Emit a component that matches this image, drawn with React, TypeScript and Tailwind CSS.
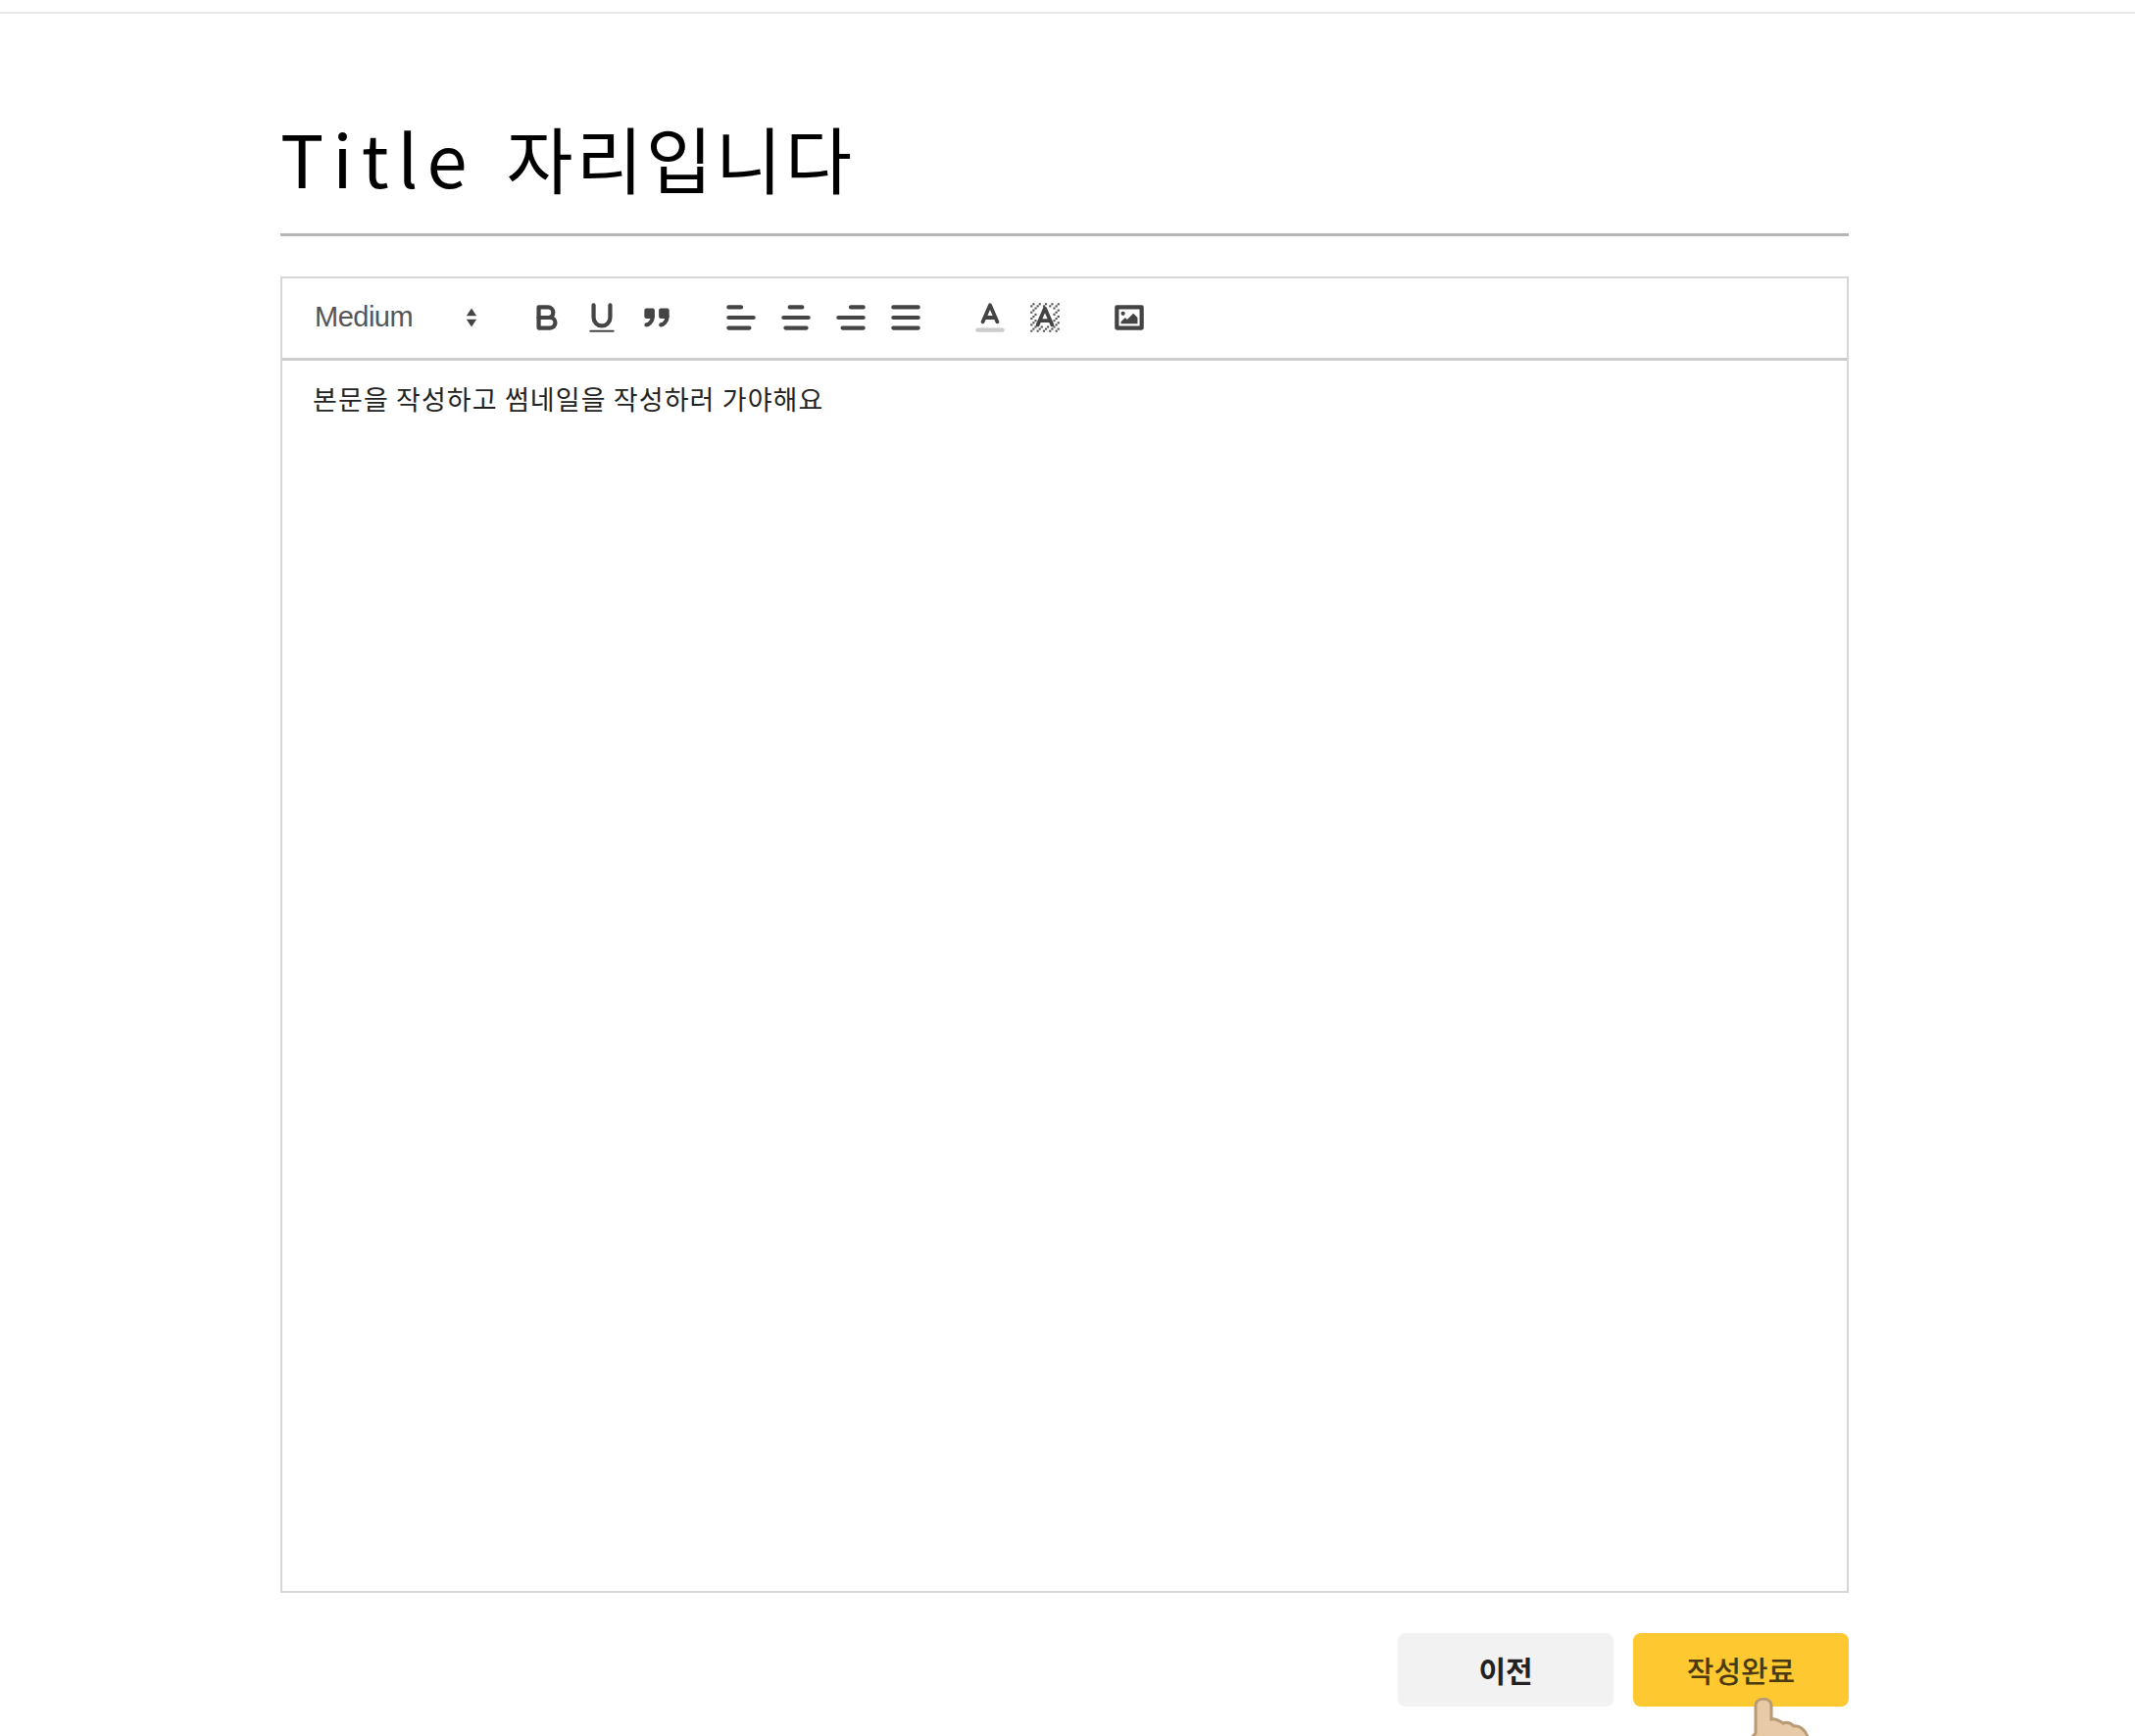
const Ico = ({ children }: { children: React.ReactNode }) => (
  <span className="flex h-[48px] w-[56px] items-center justify-center">
    <svg viewBox="0 0 18 18" className="h-[38px] w-[38px] fill-none stroke-[#444] [stroke-linecap:round] [stroke-linejoin:round] [stroke-width:2]">
      {children}
    </svg>
  </span>
);

// hatch cells of the background colour icon, with the letter area left out
const hatch: [number, number][] = [];
for (let x = 2; x <= 15; x++) {
  for (let y = 2; y <= 15; y++) {
    const inLetter = x >= 5 && x <= 12 && y >= 4 && y <= 12;
    if ((x + y) % 3 === 2 && !inLetter) hatch.push([x, y]);
  }
}

function Toolbar() {
  return (
    <div className="flex h-[84px] items-center border-b-[3px] border-[#ccc] pb-[2px] pl-[16px]">
      <div className="mr-[30px] flex w-[196px] items-center justify-between pl-[17px] pr-[13px] font-['Liberation_Sans',sans-serif] text-[29px] tracking-[-0.5px] text-[#555]">
        <span>Medium</span>
        <svg viewBox="0 0 14 24" className="h-[22px] w-[12px] fill-[#444]">
          <path d="M7 1 13 10H1Z" />
          <path d="M7 23 1 14H13Z" />
        </svg>
      </div>
      <div className="mr-[30px] flex">
        <Ico>
          <path d="M5,4H9.5A2.5,2.5,0,0,1,12,6.5v0A2.5,2.5,0,0,1,9.5,9H5A0,0,0,0,1,5,9V4A0,0,0,0,1,5,4Z" />
          <path d="M5,9h5.5A2.5,2.5,0,0,1,13,11.5v0A2.5,2.5,0,0,1,10.5,14H5a0,0,0,0,1,0,0V9A0,0,0,0,1,5,9Z" />
        </Ico>
        <Ico>
          <path d="M5,3V9a4.012,4.012,0,0,0,4,4H9a4.012,4.012,0,0,0,4-4V3" />
          <rect x="3" y="15" width="12" height="1" rx="0.5" className="fill-[#444] stroke-none" />
        </Ico>
        <Ico>
          <rect x="4" y="5.5" width="3" height="3" className="fill-[#444]" />
          <rect x="11" y="5.5" width="3" height="3" className="fill-[#444]" />
          <path d="M7,8.5c0,2.5-2,4-3,4" />
          <path d="M14,8.5c0,2.5-2,4-3,4" />
        </Ico>
      </div>
      <div className="mr-[30px] flex">
        <Ico>
          <path d="M3 9H15M3 14H13M3 4H9" />
        </Ico>
        <Ico>
          <path d="M3 9H15M4 14H14M6 4H12" />
        </Ico>
        <Ico>
          <path d="M3 9H15M5 14H15M9 4H15" />
        </Ico>
        <Ico>
          <path d="M3 9H15M3 14H15M3 4H15" />
        </Ico>
      </div>
      <div className="mr-[30px] flex">
        <Ico>
          <path d="M3 15H15" className="stroke-[#ccc]" />
          <path d="M5.5 11 9 3 12.5 11M11.63 9H6.38" className="[stroke-width:1.8]" />
        </Ico>
        <Ico>
          {hatch.map(([x, y]) => (
            <rect key={`${x}-${y}`} x={x} y={y} width="1" height="1" className="fill-[#555] stroke-none" />
          ))}
          <path d="M5.5 13 9 5 12.5 13M11.63 11H6.38" className="[stroke-width:1.8]" transform="translate(0 -0.5)" />
        </Ico>
      </div>
      <Ico>
        <rect x="3" y="4" width="12" height="10" />
        <circle cx="6" cy="7" r="1" className="fill-[#444] stroke-none" />
        <path d="M5 12V11L7 9 8 10 11 7 13 9V12Z" className="fill-[#444] stroke-none" />
      </Ico>
    </div>
  );
}

export default function App() {
  return (
    <div className="h-[1771px] overflow-hidden bg-white font-['Noto_Sans_CJK_KR',sans-serif]">
      <div className="h-[14px] border-b-2 border-[#e8e8e8]" />
      <main className="relative ml-[286px] w-[1600px]">
        <h1 className="flex h-[227px] items-end border-b-[3px] border-[#b5b5b5] pb-[38px] text-[74px] font-normal leading-[80px] text-black">
          <span className="tracking-[9px]">Title</span>
          <span className="ml-[31px] tracking-[3px]">자리입니다</span>
        </h1>
        <section className="mt-[41px] border-2 border-[#d6d6d6]">
          <Toolbar />
          <div className="h-[1255px] px-[31px] py-[15px] text-[27px] leading-[48px] tracking-[1.1px] text-[#222]">
            본문을 작성하고 썸네일을 작성하러 가야해요
          </div>
        </section>
        <div className="mt-[41px] flex justify-end gap-[20px]">
          <button className="h-[75px] w-[220px] rounded-[8px] bg-[#f2f2f2] text-[30px] font-bold text-[#222]">이전</button>
          <button className="h-[75px] w-[220px] rounded-[8px] bg-[#fdc830] text-[30px] font-medium text-[#4a3a12]">작성완료</button>
        </div>
        <svg viewBox="0 0 76 50" className="absolute left-[1490px] top-[1718px] h-[50px] w-[76px]">
          <path
            d="M2 50 C8 44 12 40 15 36 V8 C15 -1 31 -1 31 8 V22 C36 21 40 24 43 26 C48 24 52 27 54 29 C60 28 66 33 68 40 L72 50 Z"
            className="fill-[#e8cba6] stroke-[#b89a76] [stroke-width:3]"
          />
        </svg>
      </main>
    </div>
  );
}
